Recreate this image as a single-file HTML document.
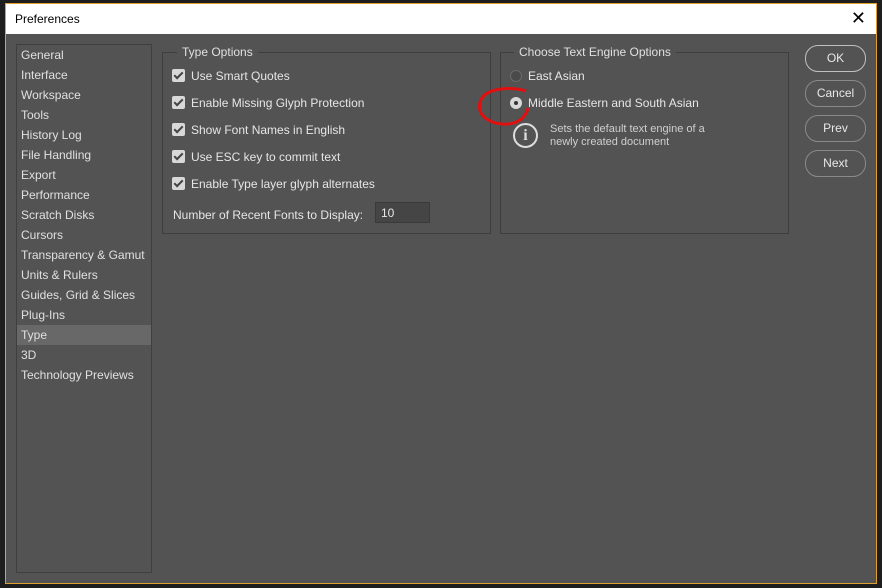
<!DOCTYPE html>
<html><head><style>
*{margin:0;padding:0;box-sizing:border-box}
body{width:882px;height:588px;background:#1e1e1e;position:relative;overflow:hidden;font-family:"Liberation Sans",sans-serif;font-size:12px;color:#dcdcdc}
.win{position:absolute;left:5px;top:3px;width:872px;height:581px;border:1px solid #e0a030;background:#535353}
.title{position:absolute;left:0;top:0;width:870px;height:30px;background:#fff;color:#000;font-size:12px;padding:8px 0 0 9px}
.close{position:absolute;right:10px;top:4px;font-size:18px;color:#000}
.side{position:absolute;left:10px;top:40px;width:136px;height:529px;border:1px solid #3f3f3f;background:#535353}
.side div{height:20px;line-height:20px;padding-left:4px;color:#e0e0e0}
.side .sel{background:#686868}
.grp{position:absolute;border:1px solid #3e3e3e}
.lg{position:absolute;top:-8px;background:#535353;padding:0 5px;color:#e0e0e0;font-size:12px}
.row{position:absolute;left:9px;height:16px;line-height:16px;color:#e6e6e6}
.cb{display:inline-block;width:13px;height:13px;background:#d8d8d8;border-radius:2px;vertical-align:-2px;margin-right:6px;position:relative}
.cb:after{content:"";position:absolute;left:4px;top:1px;width:3px;height:7px;border:solid #444;border-width:0 2px 2px 0;transform:rotate(45deg)}
.btn{position:absolute;left:799px;width:61px;height:27px;border:1px solid #8a8a8a;border-radius:13px;text-align:center;line-height:25px;color:#e8e8e8}
</style></head><body>
<div class="win">
<div class="title">Preferences<span class="close">✕</span></div>
<div class="side">
<div>General</div><div>Interface</div><div>Workspace</div><div>Tools</div><div>History Log</div><div>File Handling</div><div>Export</div><div>Performance</div><div>Scratch Disks</div><div>Cursors</div><div>Transparency &amp; Gamut</div><div>Units &amp; Rulers</div><div>Guides, Grid &amp; Slices</div><div>Plug-Ins</div><div class="sel">Type</div><div>3D</div><div>Technology Previews</div>
</div>
<div class="grp" style="left:156px;top:48px;width:329px;height:182px">
<span class="lg" style="left:14px">Type Options</span>
<div class="row" style="top:15px"><span class="cb"></span>Use Smart Quotes</div>
<div class="row" style="top:42px"><span class="cb"></span>Enable Missing Glyph Protection</div>
<div class="row" style="top:69px"><span class="cb"></span>Show Font Names in English</div>
<div class="row" style="top:96px"><span class="cb"></span>Use ESC key to commit text</div>
<div class="row" style="top:123px"><span class="cb"></span>Enable Type layer glyph alternates</div>
<div class="row" style="top:154px;left:10px">Number of Recent Fonts to Display:</div>
<div style="position:absolute;left:212px;top:149px;width:55px;height:21px;background:#454545;border:1px solid #3a3a3a;padding:3px 5px;color:#e6e6e6">10</div>
</div>
<div class="grp" style="left:494px;top:48px;width:289px;height:182px">
<span class="lg" style="left:13px">Choose Text Engine Options</span>
<div class="row" style="top:15px"><span style="display:inline-block;width:12px;height:12px;border-radius:50%;border:1px solid #6a6a6a;background:#4a4a4a;vertical-align:-2px;margin-right:6px"></span>East Asian</div>
<div class="row" style="top:42px"><span style="display:inline-block;width:12px;height:12px;border-radius:50%;background:#d8d8d8;vertical-align:-2px;margin-right:6px;position:relative"><span style="position:absolute;left:4px;top:4px;width:4px;height:4px;border-radius:50%;background:#333"></span></span>Middle Eastern and South Asian</div>
<div style="position:absolute;left:12px;top:70px;width:25px;height:25px;border:2px solid #ddd;border-radius:50%;text-align:center;font:bold 16px/21px 'Liberation Serif',serif;color:#ddd">i</div>
<div style="position:absolute;left:49px;top:70px;font-size:11px;line-height:13px;color:#cfcfcf">Sets the default text engine of a<br>newly created document</div>
</div>
<svg style="position:absolute;left:466px;top:80px" width="66" height="48"><path d="M54 7 C38 2 12 4 8 18 C4 34 22 41 36 40 C48 39 54 32 56 24" fill="none" stroke="#e01010" stroke-width="3"/></svg>
<div class="btn" style="top:41px;border-color:#c0c0c0">OK</div>
<div class="btn" style="top:76px">Cancel</div>
<div class="btn" style="top:111px">Prev</div>
<div class="btn" style="top:146px">Next</div>
</div>
</body></html>
